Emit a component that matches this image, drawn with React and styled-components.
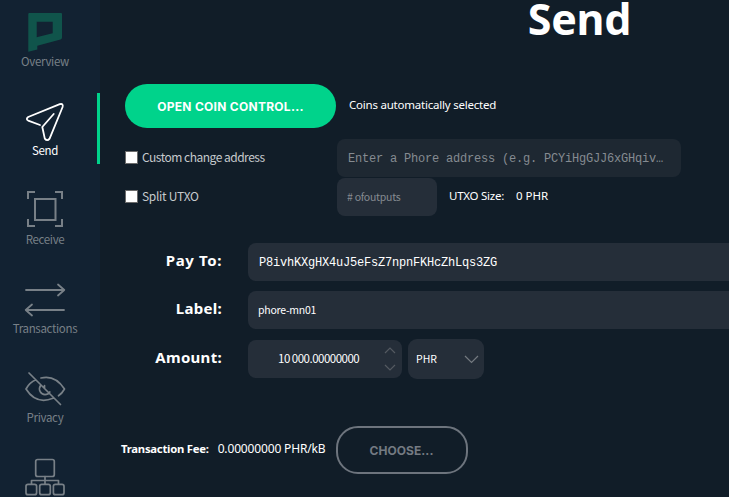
import React from "react";
import styled, { createGlobalStyle, css } from "styled-components";

const gothic = css`font-family: "Noto Sans CJK JP", sans-serif;`;
const humanist = css`font-family: "Noto Sans", sans-serif;`;

const Global = createGlobalStyle`
  *, *::before, *::after { box-sizing: border-box; }
  body { margin: 0; background: #111d28; overflow: hidden; }
  input, button { margin: 0; }
`;

const Window = styled.div`
  display: flex;
  width: 100vw;
  height: 100vh;
  overflow: hidden;
  background: #111d28;
  color: #fff;
`;

const Sidebar = styled.nav`
  flex: 0 0 100px;
  height: 100vh;
  overflow: hidden;
  padding-top: 4px;
  background: #122232;
  display: flex;
  flex-direction: column;
  gap: 18px;
`;

const NavItem = styled.a`
  flex: 0 0 71px;
  display: flex;
  flex-direction: column;
  align-items: center;
  padding: 6px 7px 0 0;
  border-right: 3px solid ${(p) => (p.$active ? "#00d38b" : "transparent")};
  color: ${(p) => (p.$active ? "#fff" : "#788087")};
`;

const NavIcon = styled.svg`
  width: 44px;
  height: 44px;
  flex: none;
  fill: none;
  stroke: currentColor;
  stroke-width: 1.8;
  stroke-linecap: round;
  stroke-linejoin: round;
`;

const NavLabel = styled.span`
  ${gothic}
  margin-top: -1px;
  font-size: 11.5px;
  font-weight: 400;
  letter-spacing: -0.32px;
  line-height: 16px;
  white-space: nowrap;
`;

const Main = styled.main`
  flex: 0 0 959px;
  display: flex;
  flex-direction: column;
`;

const Title = styled.h1`
  ${humanist}
  margin: 0;
  height: 84px;
  font-size: 43px;
  font-weight: 700;
  letter-spacing: -0.3px;
  line-height: 37px;
  text-align: center;
`;

const Row = styled.div`
  display: flex;
  align-items: center;
  height: ${(p) => p.$h}px;
  margin-bottom: ${(p) => p.$after || 0}px;
  padding-left: ${(p) => p.$indent || 0}px;
`;

const PillButton = styled.button`
  width: ${(p) => p.$w}px;
  height: ${(p) => p.$h}px;
  flex: none;
  padding: 2px 0 0;
  margin-left: ${(p) => p.$gap || 0}px;
  border: ${(p) => (p.$outline ? "2px solid #6d747d" : "0")};
  border-radius: 22px;
  background: ${(p) => (p.$outline ? "transparent" : "#00d38b")};
  color: ${(p) => (p.$outline ? "#747a82" : "#fff")};
  font: 700 12px/16px Inter, sans-serif;
  letter-spacing: ${(p) => (p.$outline ? 0.05 : 0.28)}px;
`;

const Text = styled.span`
  ${humanist}
  font-size: ${(p) => p.$size || 11.5}px;
  font-weight: ${(p) => (p.$bold ? 700 : 400)};
  letter-spacing: ${(p) => p.$track || 0}px;
  line-height: 16px;
  padding-bottom: 2px;
  margin-left: ${(p) => p.$gap || 0}px;
  white-space: nowrap;
`;

const CheckLabel = styled.label`
  ${gothic}
  display: flex;
  align-items: center;
  gap: 4px;
  width: 212px;
  flex: none;
  color: #c6cacd;
  font-size: 12px;
  font-weight: 400;
  letter-spacing: ${(p) => p.$track}px;
  line-height: 16px;
`;

const CheckText = styled.span`
  padding-bottom: 2px;
`;

const Checkbox = styled.input`
  appearance: none;
  width: 13px;
  height: 13px;
  margin-bottom: 1px;
  background: #fff;
  border: 1px solid #6b6b6b;
`;

const Field = styled.input`
  width: ${(p) => p.$w}px;
  height: 38px;
  flex: none;
  padding: 0 11px;
  border: 0;
  outline: 0;
  border-radius: 8px;
  background: ${(p) => (p.$dim ? "#1e2832" : "#252e39")};
  color: #fff;
  ${(p) =>
    p.$mono
      ? css`font: 12px "Liberation Mono", monospace; letter-spacing: -0.2px; padding-top: 2px;`
      : css`${gothic} font-size: 10.5px; letter-spacing: -0.25px; padding: 0 10px 2px;`}
  &::placeholder { color: #858b91; opacity: 1; }
`;

const FormLabel = styled.label`
  ${humanist}
  width: 122px;
  margin-right: 26px;
  padding-bottom: 4px;
  flex: none;
  text-align: right;
  font-size: 15px;
  font-weight: 700;
  letter-spacing: ${(p) => p.$track}px;
  line-height: 20px;
  white-space: nowrap;
`;

const AmountBox = styled.div`
  ${gothic}
  width: 154px;
  height: 38px;
  padding: 0 6px 0 30px;
  border-radius: 8px;
  background: #252e39;
  display: flex;
  align-items: center;
  justify-content: space-between;
  font-size: 11.5px;
  letter-spacing: -0.5px;
`;

const Value = styled.span`
  padding-bottom: 2px;
`;

const Steppers = styled.div`
  display: flex;
  flex-direction: column;
  gap: 10px;
`;

const Chevron = styled.svg`
  display: block;
  width: ${(p) => p.$w}px;
  height: ${(p) => p.$h}px;
  fill: none;
  stroke: ${(p) => p.$color};
  stroke-width: 1.2;
`;

const UnitSelect = styled.div`
  ${gothic}
  width: 76px;
  height: 40px;
  margin-left: 6px;
  padding: 0 5px 0 8px;
  border-radius: 9px;
  background: #252e39;
  display: flex;
  align-items: center;
  justify-content: space-between;
  font-size: 10.5px;
`;

const icons = {
  Overview: (
    <path
      d="M6.3 3H38Q39 3 39 4V27.5Q39 29 37.5 29.4L14.3 35.7V39.5L5.3 41.7V4Q5.3 3 6.3 3ZM13.7 11.7V27.3L29.7 23.3V11.7Z"
      fill="#10544b" fillRule="evenodd" stroke="none"
    />
  ),
  Send: <path d="M17 26 5.2 21.6Q2.5 20 5.2 18L36.8 5.2Q40.5 4.2 39.6 8L26.6 39.6Q24.2 42.6 21.8 39.6L19.3 28 30.7 15" />,
  Receive: (
    <g strokeLinecap="butt" strokeLinejoin="miter" strokeWidth="2">
      <path d="M5 11V4H12M32 4H39V11M39 31V38H32M12 38H5V31" />
      <rect x="12" y="11" width="20.5" height="21" />
    </g>
  ),
  Transactions: <path d="M3 13H41M35 7.5 41.3 13 35 18.5M41 33H3M9 27.5 2.7 33 9 38.5" />,
  Privacy: (
    <path
      d="M6 7 37.5 38.5M18 12Q32 8.5 41.5 23Q39 27.5 35.5 29.8M12.8 13.8Q6.5 16.5 3 23Q13 39 30 32.3M17.8 19C14.5 24 18 28.6 22 28.6C24 28.6 25.8 27.6 26.8 26M21.5 19.5V22.2"
      strokeWidth="1.7"
    />
  ),
  Network: (
    <g strokeWidth="1.7">
      <rect x="12.7" y="4.5" width="18.6" height="17" rx="2" />
      <path d="M22 21.5V29M8.5 29V25.5H35.5V29" />
      <rect x="3" y="29.3" width="10.6" height="10.4" rx="2" />
      <rect x="16.7" y="29.3" width="10.6" height="10.4" rx="2" />
      <rect x="30.4" y="29.3" width="10.6" height="10.4" rx="2" />
    </g>
  ),
};

function NavEntry({ name, active }) {
  return (
    <NavItem $active={active}>
      <NavIcon viewBox="0 0 44 44">{icons[name]}</NavIcon>
      {name !== "Network" && <NavLabel>{name}</NavLabel>}
    </NavItem>
  );
}

export default function App() {
  return (
    <>
      <Global />
      <Window>
        <Sidebar>
          {Object.keys(icons).map((name) => (
            <NavEntry key={name} name={name} active={name === "Send"} />
          ))}
        </Sidebar>
        <Main>
          <Title>Send</Title>
          <Row $h={44} $after={11} $indent={25}>
            <PillButton $w={211} $h={44}>OPEN COIN CONTROL...</PillButton>
            <Text $gap={13} $track={-0.22}>Coins automatically selected</Text>
          </Row>
          <Row $h={38} $after={1} $indent={25}>
            <CheckLabel $track={-0.5}>
              <Checkbox type="checkbox" />
              <CheckText>Custom change address</CheckText>
            </CheckLabel>
            <Field $w={344} $mono $dim placeholder="Enter a Phore address (e.g. PCYiHgGJJ6xGHqiv…" />
          </Row>
          <Row $h={38} $after={27} $indent={25}>
            <CheckLabel $track={-0.3}>
              <Checkbox type="checkbox" />
              <CheckText>Split UTXO</CheckText>
            </CheckLabel>
            <Field $w={100} placeholder="# ofoutputs" />
            <Text $gap={12} $track={-0.25}>UTXO Size:</Text>
            <Text $gap={12}>0 PHR</Text>
          </Row>
          <Row $h={38} $after={10}>
            <FormLabel $track={0.6}>Pay To:</FormLabel>
            <Field $w={790} $mono defaultValue="P8ivhKXgHX4uJ5eFsZ7npnFKHcZhLqs3ZG" />
          </Row>
          <Row $h={38} $after={10}>
            <FormLabel $track={0.3}>Label:</FormLabel>
            <Field $w={790} defaultValue="phore-mn01" />
          </Row>
          <Row $h={40} $after={47}>
            <FormLabel $track={0.3}>Amount:</FormLabel>
            <AmountBox>
              <Value>10 000.00000000</Value>
              <Steppers>
                <Chevron $w={12} $h={7} $color="#545a61" viewBox="0 0 12 7"><path d="M1 6 6 1 11 6" /></Chevron>
                <Chevron $w={12} $h={7} $color="#545a61" viewBox="0 0 12 7"><path d="M1 1 6 6 11 1" /></Chevron>
              </Steppers>
            </AmountBox>
            <UnitSelect>
              <Value>PHR</Value>
              <Chevron $w={15} $h={9} $color="#747a80" viewBox="0 0 15 9"><path d="M1 1 7.5 7.5 14 1" /></Chevron>
            </UnitSelect>
          </Row>
          <Row $h={48} $indent={21}>
            <Text $bold $size={11.3} $track={-0.25}>Transaction Fee:</Text>
            <Text $gap={9} $size={12} $track={-0.15}>0.00000000 PHR/kB</Text>
            <PillButton $outline $w={132} $h={48} $gap={10}>CHOOSE...</PillButton>
          </Row>
        </Main>
      </Window>
    </>
  );
}
